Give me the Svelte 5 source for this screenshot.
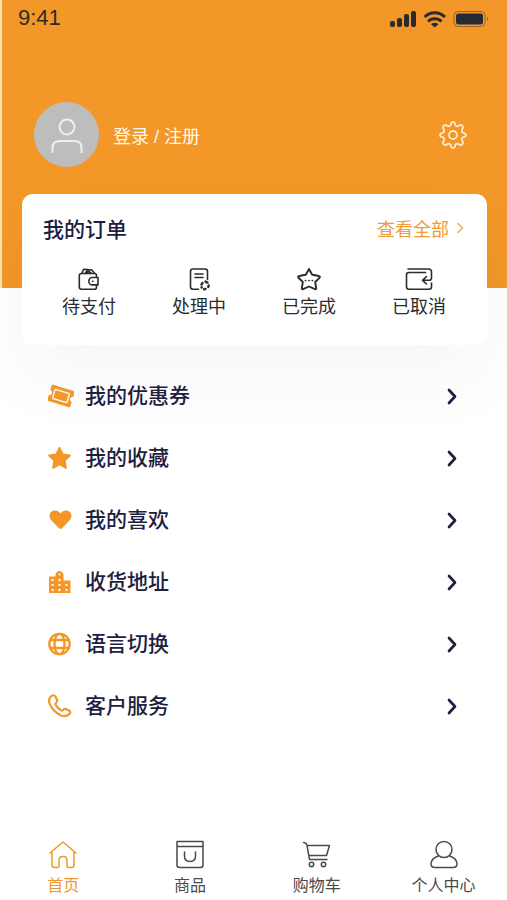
<script>
	const orders = [
		{ id: 'pay', label: '待支付' },
		{ id: 'process', label: '处理中' },
		{ id: 'done', label: '已完成' },
		{ id: 'cancel', label: '已取消' }
	];

	const menu = [
		{ id: 'coupon', label: '我的优惠券' },
		{ id: 'star', label: '我的收藏' },
		{ id: 'heart', label: '我的喜欢' },
		{ id: 'address', label: '收货地址' },
		{ id: 'globe', label: '语言切换' },
		{ id: 'phone', label: '客户服务' }
	];

	const tabs = [
		{ id: 'home', label: '首页' },
		{ id: 'goods', label: '商品' },
		{ id: 'cart', label: '购物车' },
		{ id: 'me', label: '个人中心' }
	];

	let activeTab = 'home';
</script>

<div class="page">
	<header>
		<div class="status">
			<span class="time">9:41</span>
			<svg width="100" height="20" viewBox="0 0 100 20" fill="#2b2b2b">
				<rect x="0" y="13" width="5" height="6" rx="2" />
				<rect x="7" y="10" width="5" height="9" rx="2" />
				<rect x="14" y="6" width="5" height="13" rx="2" />
				<rect x="21" y="3" width="5" height="16" rx="2" />
				<g fill="none" stroke="#2b2b2b" stroke-width="3">
					<path d="M34.500 9a14.500 14.500 0 0 1 20.500 0" />
					<path d="M38 13.500a9.500 9.500 0 0 1 13.500 0" />
				</g>
				<path d="M41 16.200a5.500 5.500 0 0 1 7.500 0L44.700 19.500z" />
				<rect x="64" y="3.500" width="31" height="15" rx="4" fill="none" stroke="#2b2b2b" stroke-opacity=".45" />
				<rect x="66" y="5.500" width="27" height="11" rx="2.500" fill="#252a35" />
				<path d="M97 9v4q2-2 0-4z" opacity=".6" />
			</svg>
		</div>
		<div class="profile">
			<div class="avatar">
				<svg width="34" height="38" viewBox="0 0 34 38" fill="none" stroke="#efefef" stroke-width="2">
					<circle cx="17" cy="11" r="7.500" />
					<path d="M2.500 37v-5q0-7 7-7h15q7 0 7 7v5" />
				</svg>
			</div>
			<a class="login" href="#login">登录 / 注册</a>
			<button class="settings" aria-label="设置">
				<svg width="28" height="28" viewBox="0 0 28 28" fill="none" stroke="#ffeac6" stroke-width="1.800" stroke-linejoin="round">
					<circle cx="14" cy="14" r="4" />
					<path d="M14 1C16 1 16 2.500 16.300 4.200Q17.500 5.700 19.400 5C21 3.800 22 3.400 23.300 4.700S24.200 7 23 8.600Q22.300 10.500 23.800 11.700C25.500 12 27 12 27 14S25.500 16 23.800 16.300Q22.300 17.500 23 19.400C24.200 21 24.600 22 23.300 23.300S21 24.200 19.400 23Q17.500 22.300 16.300 23.800C16 25.500 16 27 14 27S12 25.500 11.700 23.800Q10.500 22.300 8.600 23C7 24.200 6 24.600 4.700 23.300S3.800 21 5 19.400Q5.700 17.500 4.200 16.300C2.500 16 1 16 1 14S2.500 12 4.200 11.700Q5.700 10.500 5 8.600C3.800 7 3.400 6 4.700 4.700S7 3.800 8.600 5Q10.500 5.700 11.700 4.200C12 2.500 12 1 14 1Z" />
				</svg>
			</button>
		</div>
	</header>

	<section class="card">
		<div class="card-head">
			<h2>我的订单</h2>
			<a href="#orders">
				查看全部
				<svg width="8" height="12" viewBox="0 0 8 12" fill="none" stroke="#f0a650" stroke-width="1.300"><path d="M1.500 1l5 5-5 5" /></svg>
			</a>
		</div>
		<div class="orders">
			{#each orders as order}
				<button>
					<svg width="28" height="24" viewBox="0 0 28 24" fill="none" stroke="#2c2c2c" stroke-width="1.600" stroke-linecap="round" stroke-linejoin="round">
						{#if order.id === 'pay'}
							<path d="M21.500 10V8.500q0-2-2-2H6.500Q4.300 6.500 4.300 8.500v11.500q0 2.200 2.200 2.200h13q2 0 2-2V18" />
							<path d="M23 10.500h-5.500a3.700 3.700 0 0 0 0 7.400H23zM17.500 14.200h.5" />
							<path d="M7 6L8.500 2.200l4.500.3L10.500 6M13 3l3.500-.3L19.500 6M12 6l1.500-1.500L16 6" />
						{:else if order.id === 'process'}
							<path d="M13.500 22.200H8q-2.500 0-2.500-2.500V4.500Q5.500 2 8 2h12q2.500 0 2.500 2.500V12.500M10 7h8M10 10.500h8" />
							<path d="M16.500 17.500l1-1.500M20.500 14.600l2 1M23.700 18.500l-.4 1.500M20.500 22l-1.500.2M16.700 20.500l-.2-.3" stroke-width="2.400" />
						{:else if order.id === 'done'}
							<path d="M14 2l3.200 5.700q5 .6 7.300 1.600.8.700 0 1.500L20.200 15l1 6.500q-.3 1-1.200.6L14 19.500l-6 2.600q-.9.400-1.200-.6l1-6.500-4.300-4.200q-.8-.8 0-1.500 2.300-1 7.300-1.600z" stroke-width="1.900" />
							<path d="M10.500 13.500h.2M13.900 13.500h.2M17.300 13.500h.2" stroke-width="1.700" />
						{:else}
							<path d="M3 2h20.500Q26.500 2 26.500 5v6q0 2.300-2.300 2.300H18M21.500 9.500L17.500 13.300l4 3.700M20.500 5.500H4q-2.500 0-2.500 2.500v11.700q0 2.500 2.500 2.500h20q2.500 0 2.500-2.500V16" />
						{/if}
					</svg>
					<span>{order.label}</span>
				</button>
			{/each}
		</div>
	</section>

	<ul class="menu">
		{#each menu as item}
			<li>
				<a href="#{item.id}">
					<svg width="26" height="24" viewBox="0 0 26 24" fill="#f29728">
						{#if item.id === 'coupon'}
							<g transform="rotate(17 13 12)">
								<path d="M2.500 3.500h21q1.500 0 1.500 1.500v4.500a2.500 2.500 0 0 0 0 5V19q0 1.500-1.500 1.500h-21Q1 20.500 1 19v-4.500a2.500 2.500 0 0 0 0-5V5Q1 3.500 2.500 3.500z" />
								<rect x="5.500" y="7.200" width="15" height="9.600" rx="1" fill="none" stroke="#fff" stroke-width="1.300" />
							</g>
						{:else if item.id === 'star'}
							<path d="M11.500 2l3.100 6.500 7.300.9-5.400 5 1.400 7.400-6.400-3.600-6.400 3.600 1.400-7.400-5.400-5 7.300-.9z" stroke="#f29728" stroke-width="2" stroke-linejoin="round" />
						{:else if item.id === 'heart'}
							<path d="M12.500 21Q11.500 21 10 19.300L3.500 12.500C-.5 8 2 2.500 7 2.500q3.500 0 5.500 3 2-3 5.500-3c5 0 7.500 5.500 3.500 10L15 19.300Q13.500 21 12.500 21z" />
						{:else if item.id === 'address'}
							<path d="M1 23V6.500h6.500V4.500Q8.500 1 11.500 1t4 3.500V10.500H22.500v12.500z" />
							<g fill="#fff">
								<rect x="3.500" y="9" width="2" height="2" /><rect x="10.500" y="9" width="2" height="2" />
								<rect x="3.500" y="14" width="2" height="2" /><rect x="10.500" y="14" width="2" height="2" /><rect x="17.500" y="14" width="2" height="2" />
								<rect x="3.500" y="19" width="2" height="2" /><rect x="10.500" y="19" width="2" height="2" /><rect x="17.500" y="19" width="2" height="2" />
								<circle cx="11.500" cy="4.500" r="1" />
							</g>
						{:else if item.id === 'globe'}
							<g fill="none" stroke="#f29728" stroke-width="2.300">
								<circle cx="11.500" cy="12" r="10.200" />
								<ellipse cx="11.500" cy="12" rx="5" ry="10.200" />
								<path d="M2.500 8h18M2.500 16h18" />
							</g>
						{:else}
							<path d="M3 2.500Q5.500 0 7.500 2.500L9 6q.6 1.500-1 3-1 1 0 2.300 2 3 4.800 4.900 1.200.8 2.200-.2 1.500-1.500 3-1l3.300 1.700q2 1.300 0 3.500-3.500 3-8.300 1.300Q4 17 1.200 8.500.500 5 3 2.500z" fill="none" stroke="#f29728" stroke-width="2.200" stroke-linejoin="round" />
						{/if}
					</svg>
					<span>{item.label}</span>
					<svg width="12" height="18" viewBox="0 0 12 18" fill="none" stroke="#1d2040" stroke-width="2.700" stroke-linecap="round" stroke-linejoin="round"><path d="M3 3L9 9.500l-6 6.500" /></svg>
				</a>
			</li>
		{/each}
	</ul>

	<nav>
		{#each tabs as tab}
			<button class:active={activeTab === tab.id} on:click={() => (activeTab = tab.id)}>
				<svg width="30" height="30" viewBox="0 0 30 30" fill="none" stroke="currentColor" stroke-width="1.500" stroke-linecap="round" stroke-linejoin="round">
					{#if tab.id === 'home'}
						<path d="M2 13L15 2l13 11M4 11.500V25q0 2.500 2.500 2.500h3q1.500 0 1.500-1.500v-6q0-3.500 4-3.500t4 3.500v6q0 1.500 1.500 1.500h3Q26 27.500 26 25V11.500" />
					{:else if tab.id === 'goods'}
						<path d="M2 1.500h26V25q0 2.500-2.500 2.500h-21Q2 27.500 2 25zM2 6.500h26M9.500 12v4q0 5.500 5.500 5.500t5.500-5.500v-4" />
					{:else if tab.id === 'cart'}
						<path d="M1.500 2.500q3 0 3.500 3L7.500 19.500H25M5 5.500h22.500L24.500 15.500H7" />
						<circle cx="9.500" cy="24.500" r="2.200" />
						<circle cx="21.500" cy="24.500" r="2.200" />
					{:else}
						<circle cx="15" cy="9.500" r="8" />
						<path d="M9.500 16Q2 18.500 2 24q0 3.500 4 3.500h18q4 0 4-3.500 0-5.500-7.500-8" />
					{/if}
				</svg>
				<span>{tab.label}</span>
			</button>
		{/each}
	</nav>
</div>

<style>
	:global(body) {
		margin: 0;
		background: #fff;
	}

	.page {
		min-height: 100vh;
		display: flex;
		flex-direction: column;
		font-family: "Liberation Sans", "Noto Sans CJK SC", sans-serif;
	}

	a {
		text-decoration: none;
		color: inherit;
	}

	button {
		border: 0;
		padding: 0;
		background: none;
		font: inherit;
		color: inherit;
		cursor: pointer;
	}

	svg {
		display: block;
		flex: none;
	}

	header {
		background: #f29728;
		border-left: 2px solid #fbe0b8;
		padding-bottom: 121px;
	}

	.status {
		display: flex;
		justify-content: space-between;
		align-items: center;
		height: 36px;
		padding: 0 17px 0 16px;
	}

	.time {
		font-size: 22px;
		color: #2f2b25;
	}

	.profile {
		display: flex;
		align-items: center;
		margin-top: 66px;
		padding: 0 40px 0 32px;
	}

	.avatar {
		width: 65px;
		height: 65px;
		border-radius: 50%;
		background: #bdbdbd;
		display: flex;
		align-items: center;
		justify-content: center;
	}

	.login {
		margin-left: 14px;
		font-size: 18px;
		color: #fff8e8;
	}

	.settings {
		margin-left: auto;
	}

	.card {
		margin: -94px 20px 0 22px;
		padding: 20px 13px 25px 12px;
		border-radius: 11px;
		background: #fff;
		box-shadow: 0 36px 72px rgba(50, 60, 110, 0.04);
	}

	.card-head {
		display: flex;
		justify-content: space-between;
		align-items: center;
		height: 28px;
		padding: 0 10px 0 9px;
	}

	h2 {
		margin: 0;
		font-size: 21px;
		font-weight: 500;
		color: #1d2040;
	}

	.card-head a {
		display: flex;
		align-items: center;
		gap: 7px;
		font-size: 18px;
		color: #f09a35;
	}

	.orders {
		display: grid;
		grid-template-columns: repeat(4, 1fr);
		margin-top: 25px;
	}

	.orders button {
		display: flex;
		flex-direction: column;
		align-items: center;
		gap: 3px;
		font-size: 18px;
		line-height: 26px;
		color: #2c2c2c;
	}

	.menu {
		list-style: none;
		margin: 20px 0 0;
		padding: 0 49px 0 48px;
	}

	.menu a {
		display: flex;
		align-items: center;
		height: 62px;
		font-size: 21px;
		line-height: 28px;
		font-weight: 500;
		color: #1d2040;
	}

	.menu span {
		flex: 1;
		margin-left: 11px;
	}

	nav {
		display: grid;
		grid-template-columns: repeat(4, 1fr);
		margin-top: auto;
		padding-bottom: 2px;
	}

	nav button {
		display: flex;
		flex-direction: column;
		align-items: center;
		gap: 4px;
		font-size: 16px;
		line-height: 24px;
		color: #4a4a4a;
	}

	nav .active {
		color: #f29728;
	}
</style>
